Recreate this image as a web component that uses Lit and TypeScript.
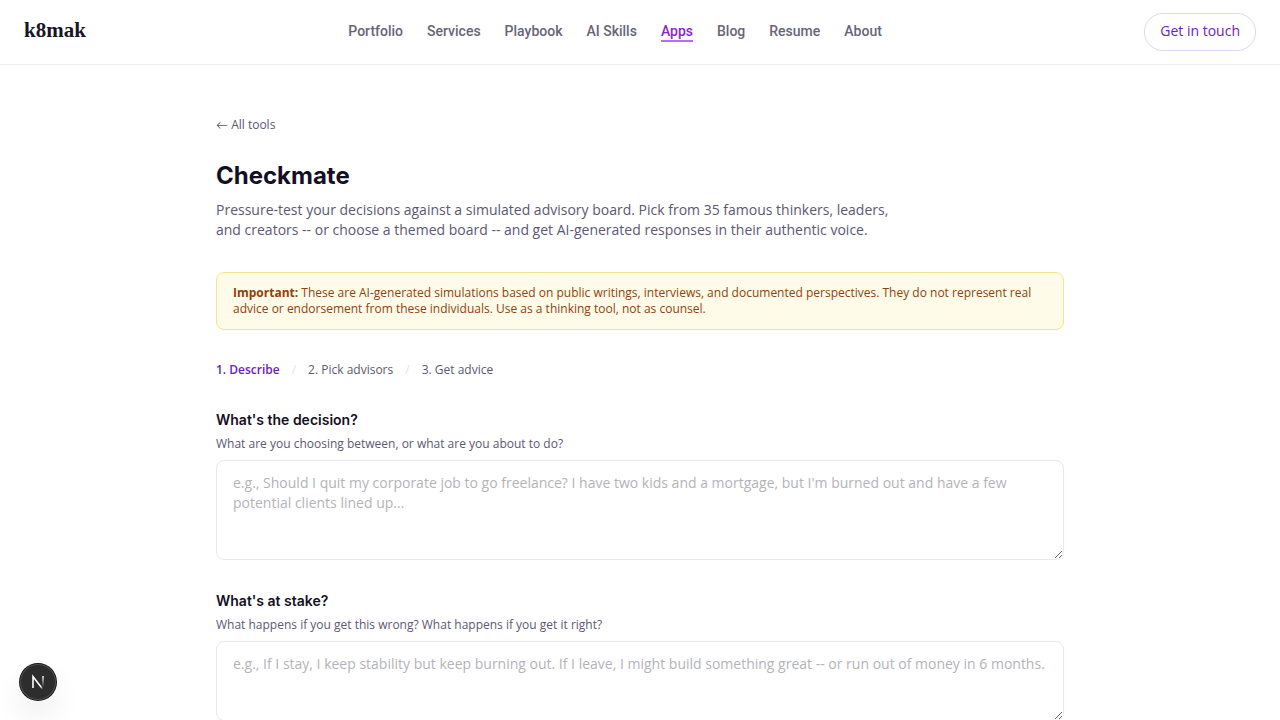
import { LitElement, html, css } from "lit";
import { customElement, state } from "lit/decorators.js";
import { classMap } from "lit/directives/class-map.js";

interface Question {
  id: string;
  label: string;
  hint: string;
  placeholder: string;
  size: "tall" | "short";
}

const NAV = ["Portfolio", "Services", "Playbook", "AI Skills", "Apps", "Blog", "Resume", "About"];
const STEPS = ["1. Describe", "2. Pick advisors", "3. Get advice"];
const QUESTIONS: Question[] = [
  {
    id: "decision",
    label: "What's the decision?",
    hint: "What are you choosing between, or what are you about to do?",
    placeholder:
      "e.g., Should I quit my corporate job to go freelance? I have two kids and a mortgage, but I'm burned out and have a few potential clients lined up...",
    size: "tall",
  },
  {
    id: "stake",
    label: "What's at stake?",
    hint: "What happens if you get this wrong? What happens if you get it right?",
    placeholder:
      "e.g., If I stay, I keep stability but keep burning out. If I leave, I might build something great -- or run out of money in 6 months.",
    size: "short",
  },
];

@customElement("site-header")
export class SiteHeader extends LitElement {
  static styles = css`
    :host { display: block; border-bottom: 1px solid #f1eff5; background: #fff; }
    .bar { display: flex; align-items: center; justify-content: space-between; height: 64px; padding: 0 24px; box-sizing: border-box; }
    a { text-decoration: none; }
    .logo { font: 700 21px/28px "Liberation Serif", serif; color: #1a1628; padding-bottom: 4px; }
    .nav { display: flex; gap: 24px; }
    .link { font: 500 14px/18px Roboto, sans-serif; color: #686478; border-bottom: 2px solid transparent; }
    .link.active { color: #8b1fd6; border-bottom-color: #b56ef0; }
    .cta { font: 500 14px/20px "Open Sans", sans-serif; color: #6b21c8; padding: 7px 15px 9px; border: 1px solid #ddd6f8; border-radius: 19px; }
  `;
  render() {
    return html`<header class="bar">
      <a class="logo" href="#home">k8mak</a>
      <nav class="nav">
        ${NAV.map((n) => html`<a class=${classMap({ link: true, active: n === "Apps" })} href="#${n}">${n}</a>`)}
      </nav>
      <a class="cta" href="#contact">Get in touch</a>
    </header>`;
  }
}

@customElement("question-field")
export class QuestionField extends LitElement {
  static properties = { q: { attribute: false } };
  declare q: Question;
  static styles = css`
    :host { display: block; }
    .label { display: block; font: 600 14px/20px Inter, sans-serif; color: #150f24; }
    .hint { margin: 6px 0 8px; font-size: 12px; line-height: 16px; color: #5d5773; }
    .box {
      display: block; width: 100%; box-sizing: border-box; margin: 0; padding: 12px 16px;
      border: 1px solid #e9e7f2; border-radius: 8px; background: #fff; color: #150f24;
      font: 14px/20px "Open Sans", sans-serif; resize: vertical; outline-color: #8b1fd6;
    }
    .tall { height: 100px; }
    .short { height: 80px; }
    .box::placeholder { color: #b4b3b9; }
  `;
  render() {
    const q = this.q;
    return html`<label class="label" for=${q.id}>${q.label}</label>
      <p class="hint" id="hint">${q.hint}</p>
      <textarea class="box ${q.size}" id=${q.id} aria-describedby="hint" placeholder=${q.placeholder}></textarea>`;
  }
}

@customElement("app-root")
export class AppRoot extends LitElement {
  @state() private step = 0;

  static styles = css`
    :host { display: block; min-height: 100vh; background: #fff; font-family: "Open Sans", sans-serif; color: #5d5773; }
    .page { max-width: 848px; margin: 0 auto; padding: 52px 24px 0; }
    .back { display: block; width: max-content; font-size: 12px; line-height: 16px; color: #5d5870; text-decoration: none; }
    .arrow { font-family: Lato, sans-serif; }
    .title { margin: 27px 0 8px; font: 700 24px/32px Inter, sans-serif; color: #150f24; }
    .intro { margin: 0; max-width: 680px; font-size: 14px; line-height: 20px; }
    .notice { margin: 32px 0; padding: 12px 16px; border: 1px solid #f7e293; border-radius: 8px; background: #fffbe9; color: #923f0c; font-size: 12px; line-height: 16px; }
    .notice p { margin: 0; }
    .steps { display: flex; gap: 12px; margin: 0 0 32px; }
    .step { padding: 0; border: 0; background: none; color: #5d5870; font: 12px/16px "Open Sans", sans-serif; cursor: pointer; }
    .step.current { color: #6b21c0; font-weight: 600; }
    .slash { color: #e6e3ee; font-size: 12px; line-height: 16px; }
    .form { display: grid; gap: 31px; }
    .dev {
      position: fixed; left: 20px; bottom: 20px; width: 36px; height: 36px; padding: 0; border: 0; border-radius: 50%;
      display: grid; place-items: center; background: #2d2d2d; cursor: pointer;
      box-shadow: 0 0 0 1px #171717, inset 0 0 0 1px #4d4d4d, 0 16px 32px -8px rgba(0, 0, 0, 0.24);
    }
  `;

  render() {
    return html`<site-header></site-header>
      <main class="page">
        <a class="back" href="#apps"><span class="arrow">←</span> All tools</a>
        <h1 class="title">Checkmate</h1>
        <p class="intro">Pressure-test your decisions against a simulated advisory board. Pick from 35 famous thinkers, leaders, and creators -- or choose a themed board -- and get AI-generated responses in their authentic voice.</p>
        <aside class="notice">
          <p><strong>Important:</strong> These are AI-generated simulations based on public writings, interviews, and documented perspectives. They do not represent real advice or endorsement from these individuals. Use as a thinking tool, not as counsel.</p>
        </aside>
        <div class="steps">
          ${STEPS.map(
            (s, i) => html`${i ? html`<span class="slash">/</span>` : ""}<button
                class=${classMap({ step: true, current: i === this.step })}
                @click=${() => (this.step = i)}
              >${s}</button>`
          )}
        </div>
        <form class="form">${QUESTIONS.map((q) => html`<question-field .q=${q}></question-field>`)}</form>
      </main>
      <button class="dev" aria-label="Developer tools">
        <svg width="16" height="16" viewBox="0 0 16 16" fill="none">
          <defs>
            <linearGradient id="diag" x1="8" y1="8" x2="13" y2="15" gradientUnits="userSpaceOnUse">
              <stop offset="0" stop-color="#fff" /><stop offset="0.6" stop-color="#fff" /><stop offset="1" stop-color="#fff" stop-opacity="0" />
            </linearGradient>
            <linearGradient id="stem" x1="12" y1="2" x2="12" y2="13" gradientUnits="userSpaceOnUse">
              <stop offset="0" stop-color="#fff" /><stop offset="1" stop-color="#fff" stop-opacity="0" />
            </linearGradient>
          </defs>
          <path d="M3 14V2.5L12.6 15" stroke="url(#diag)" stroke-width="1.6" />
          <path d="M13 2V13" stroke="url(#stem)" stroke-width="1.5" />
        </svg>
      </button>`;
  }
}
